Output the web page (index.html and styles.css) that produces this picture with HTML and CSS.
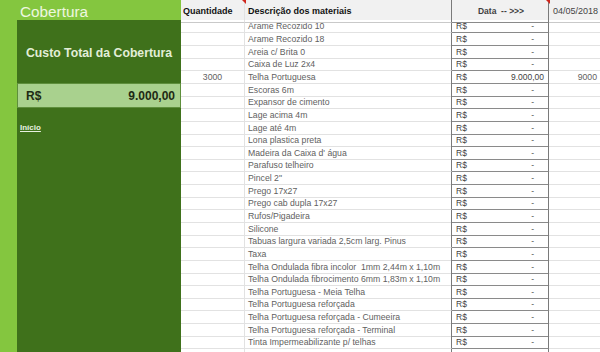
FILE: index.html
```html
<!DOCTYPE html>
<html lang="pt">
<head>
<meta charset="utf-8">
<link rel="stylesheet" href="styles.css">
</head>
<body>
<div class="page">
  <aside class="side">
    <div class="side-head">Cobertura</div>
    <div class="panel">
      <div class="panel-title">Custo Total da Cobertura</div>
      <div class="total"><span>R$</span><span>9.000,00</span></div>
      <a class="link" href="#">Início</a>
    </div>
  </aside>
  <main class="sheet">
    <div class="row head">
      <div class="c q flag">Quantidade</div>
      <div class="c d">Descrição dos materiais</div>
      <div class="c v flag">Data&nbsp; -- &gt;&gt;&gt;</div>
      <div class="c x">04/05/2018</div>
    </div>
    <div class="row"><div class="c q"></div><div class="c d">Arame Recozido 10</div><div class="c v"><span>R$</span><span class="dash">-</span></div><div class="c x"></div></div>
    <div class="row"><div class="c q"></div><div class="c d">Arame Recozido 18</div><div class="c v"><span>R$</span><span class="dash">-</span></div><div class="c x"></div></div>
    <div class="row"><div class="c q"></div><div class="c d">Areia c/ Brita 0</div><div class="c v"><span>R$</span><span class="dash">-</span></div><div class="c x"></div></div>
    <div class="row"><div class="c q"></div><div class="c d">Caixa de Luz 2x4</div><div class="c v"><span>R$</span><span class="dash">-</span></div><div class="c x"></div></div>
    <div class="row"><div class="c q">3000</div><div class="c d">Telha Portuguesa</div><div class="c v"><span>R$</span><span>9.000,00</span></div><div class="c x">9000</div></div>
    <div class="row"><div class="c q"></div><div class="c d">Escoras 6m</div><div class="c v"><span>R$</span><span class="dash">-</span></div><div class="c x"></div></div>
    <div class="row"><div class="c q"></div><div class="c d">Expansor de cimento</div><div class="c v"><span>R$</span><span class="dash">-</span></div><div class="c x"></div></div>
    <div class="row"><div class="c q"></div><div class="c d">Lage acima 4m</div><div class="c v"><span>R$</span><span class="dash">-</span></div><div class="c x"></div></div>
    <div class="row"><div class="c q"></div><div class="c d">Lage até 4m</div><div class="c v"><span>R$</span><span class="dash">-</span></div><div class="c x"></div></div>
    <div class="row"><div class="c q"></div><div class="c d">Lona plastica preta</div><div class="c v"><span>R$</span><span class="dash">-</span></div><div class="c x"></div></div>
    <div class="row"><div class="c q"></div><div class="c d">Madeira da Caixa d' água</div><div class="c v"><span>R$</span><span class="dash">-</span></div><div class="c x"></div></div>
    <div class="row"><div class="c q"></div><div class="c d">Parafuso telheiro</div><div class="c v"><span>R$</span><span class="dash">-</span></div><div class="c x"></div></div>
    <div class="row"><div class="c q"></div><div class="c d">Pincel 2"</div><div class="c v"><span>R$</span><span class="dash">-</span></div><div class="c x"></div></div>
    <div class="row"><div class="c q"></div><div class="c d">Prego 17x27</div><div class="c v"><span>R$</span><span class="dash">-</span></div><div class="c x"></div></div>
    <div class="row"><div class="c q"></div><div class="c d">Prego cab dupla 17x27</div><div class="c v"><span>R$</span><span class="dash">-</span></div><div class="c x"></div></div>
    <div class="row"><div class="c q"></div><div class="c d">Rufos/Pigadeira</div><div class="c v"><span>R$</span><span class="dash">-</span></div><div class="c x"></div></div>
    <div class="row"><div class="c q"></div><div class="c d">Silicone</div><div class="c v"><span>R$</span><span class="dash">-</span></div><div class="c x"></div></div>
    <div class="row"><div class="c q"></div><div class="c d">Tabuas largura variada 2,5cm larg. Pinus</div><div class="c v"><span>R$</span><span class="dash">-</span></div><div class="c x"></div></div>
    <div class="row"><div class="c q"></div><div class="c d">Taxa</div><div class="c v"><span>R$</span><span class="dash">-</span></div><div class="c x"></div></div>
    <div class="row"><div class="c q"></div><div class="c d">Telha Ondulada fibra incolor&nbsp; 1mm 2,44m x 1,10m</div><div class="c v"><span>R$</span><span class="dash">-</span></div><div class="c x"></div></div>
    <div class="row"><div class="c q"></div><div class="c d">Telha Ondulada fibrocimento 6mm 1,83m x 1,10m</div><div class="c v"><span>R$</span><span class="dash">-</span></div><div class="c x"></div></div>
    <div class="row"><div class="c q"></div><div class="c d">Telha Portuguesa - Meia Telha</div><div class="c v"><span>R$</span><span class="dash">-</span></div><div class="c x"></div></div>
    <div class="row"><div class="c q"></div><div class="c d">Telha Portuguesa reforçada</div><div class="c v"><span>R$</span><span class="dash">-</span></div><div class="c x"></div></div>
    <div class="row"><div class="c q"></div><div class="c d">Telha Portuguesa reforçada - Cumeeira</div><div class="c v"><span>R$</span><span class="dash">-</span></div><div class="c x"></div></div>
    <div class="row"><div class="c q"></div><div class="c d">Telha Portuguesa reforçada - Terminal</div><div class="c v"><span>R$</span><span class="dash">-</span></div><div class="c x"></div></div>
    <div class="row"><div class="c q"></div><div class="c d">Tinta Impermeabilizante p/ telhas</div><div class="c v"><span>R$</span><span class="dash">-</span></div><div class="c x"></div></div>
    <div class="row"><div class="c q"></div><div class="c d"></div><div class="c v"></div><div class="c x"></div></div>
  </main>
</div>
</body>
</html>
```

FILE: styles.css
```css
* { box-sizing: border-box; }
html, body { margin: 0; padding: 0; }
body {
  width: 600px;
  height: 352px;
  overflow: hidden;
  background: #ffffff;
  font-family: "Liberation Sans", Arial, sans-serif;
}
.page {
  display: flex;
  width: 600px;
  height: 352px;
}
.side {
  width: 181px;
  flex: none;
  display: flex;
  flex-direction: column;
  background: #84c63f;
}
.side-head {
  height: 20px;
  padding-left: 20px;
  font-size: 15.3px;
  line-height: 23px;
  color: #eef7e0;
}
.panel {
  flex: 1;
  margin-left: 17px;
  background: #3f711b;
  display: flex;
  flex-direction: column;
}
.panel-title {
  height: 63px;
  padding-top: 26px;
  padding-left: 9px;
  font-size: 12.25px;
  font-weight: bold;
  color: #e3eed8;
  line-height: 15px;
}
.total {
  height: 25px;
  display: flex;
  justify-content: space-between;
  align-items: center;
  padding: 1px 5px 0 8px;
  background: #a9d18e;
  border: 1px solid #5e8f3c;
  font-size: 12px;
  font-weight: bold;
  color: #1e2a14;
}
.link {
  margin: 15px 0 0 3px;
  font-size: 8px;
  font-weight: bold;
  color: #e8f0e0;
  text-decoration: underline;
}
.sheet {
  width: 419px;
  flex: none;
  display: flex;
  flex-direction: column;
}
.row {
  display: grid;
  grid-template-columns: 64px 207px 97px 51px;
  height: 12.65px;
  flex: none;
  font-size: 8.7px;
  color: #5f5f5f;
}
.c {
  border-right: 1px solid #e2e2e2;
  border-bottom: 1px solid #e2e2e2;
  white-space: nowrap;
  line-height: 12px;
  padding-top: 0.4px;
}
.q { text-align: center; }
.d { padding-left: 3px; border-right-color: #7a7a7a; }
.v {
  display: flex;
  justify-content: space-between;
  padding-left: 4px;
  padding-right: 4px;
  border-right-color: #7a7a7a;
  border-bottom-color: #8a8a8a;
  color: #3f3f3f;
  font-size: 8.5px;
}
.dash { margin-right: 10px; color: #555; }
.x { text-align: right; padding-right: 3px; border-right: none; }
.head {
  height: 20px;
  background: #f1f1f1;
  color: #111;
  font-weight: bold;
  font-size: 9px;
}
.head .c {
  line-height: 22px;
  padding-top: 0;
  border-bottom-color: #c9c9c9;
  position: relative;
}
.head .q { text-align: left; padding-left: 2px; }
.head .v { justify-content: center; padding-left: 6px; border-bottom-color: #8a8a8a; }
.head .x {
  font-weight: normal;
  color: #444;
  text-align: left;
  padding-left: 4px;
  font-size: 9px;
}
.flag::after {
  content: "";
  position: absolute;
  right: -2px;
  top: 0;
  border-top: 4px solid #d0261c;
  border-left: 4px solid transparent;
}
```
